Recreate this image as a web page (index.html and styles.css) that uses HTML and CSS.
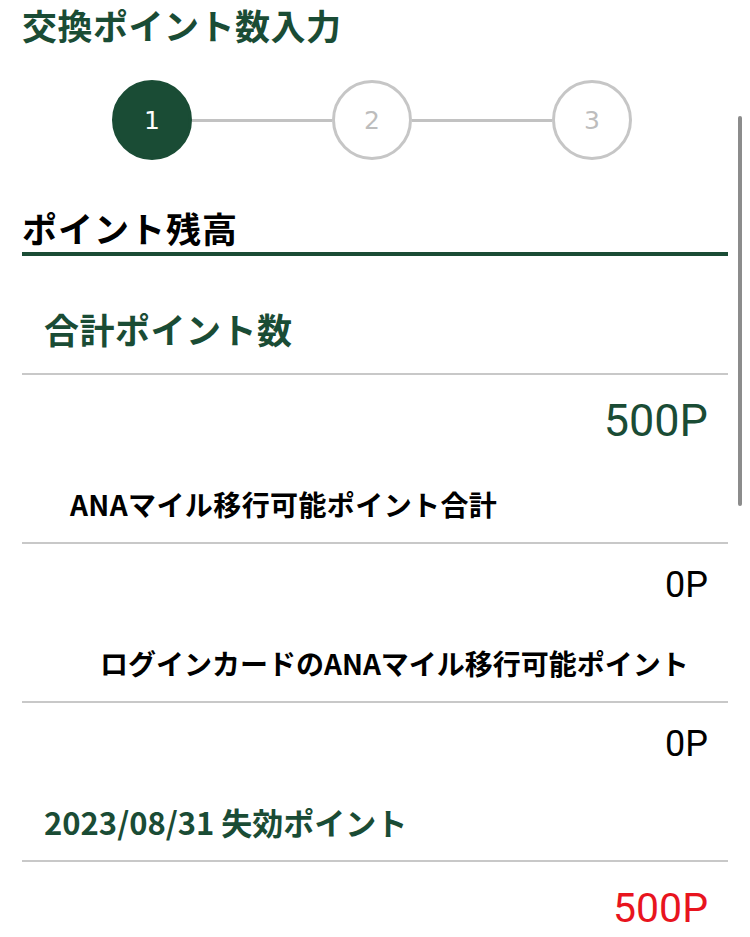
FILE: index.html
```html
<!DOCTYPE html>
<html lang="ja">
<head>
    <meta charset="UTF-8">
    <meta name="viewport" content="width=device-width, initial-scale=1.0">
    <title>交換ポイント数入力</title>
    <link rel="stylesheet" href="styles.css">
</head>
<body>
    <div class="page">
        <h1 class="page-title">交換ポイント数入力</h1>

        <!-- ステップ表示 -->
        <div class="stepper">
            <div class="step step-active">1</div>
            <div class="step-line"></div>
            <div class="step">2</div>
            <div class="step-line"></div>
            <div class="step">3</div>
        </div>

        <h2 class="section-title">ポイント残高</h2>

        <div class="balance">
            <div class="entry">
                <div class="entry-label label-total">合計ポイント数</div>
                <div class="entry-value value-large value-green">500P</div>
            </div>
            <div class="entry">
                <div class="entry-label label-sub label-indent-1">ANAマイル移行可能ポイント合計</div>
                <div class="entry-value">0P</div>
            </div>
            <div class="entry">
                <div class="entry-label label-sub label-indent-2">ログインカードのANAマイル移行可能ポイント</div>
                <div class="entry-value">0P</div>
            </div>
            <div class="entry">
                <div class="entry-label label-sub label-expire">2023/08/31 失効ポイント</div>
                <div class="entry-value value-large value-red">500P</div>
            </div>
        </div>
    </div>

    <div class="scroll-indicator"></div>
</body>
</html>
```

FILE: styles.css
```css
body {
    margin: 0;
    background: #fff;
    font-family: "Noto Sans CJK JP", "Noto Sans", sans-serif;
    color: #000;
    position: relative;
    min-height: 937px;
}

.page {
    padding: 0 22px;
}

.page-title {
    margin: 0;
    font-size: 35px;
    line-height: 50px;
    letter-spacing: 0.5px;
    font-weight: 700;
    color: #1a4c35;
}

/* ステップ */
.stepper {
    display: flex;
    align-items: center;
    margin: 30px 0 0 90px;
}

.step {
    width: 80px;
    height: 80px;
    box-sizing: border-box;
    border: 3px solid #c6c6c6;
    border-radius: 50%;
    display: flex;
    align-items: center;
    justify-content: center;
    font-family: "DejaVu Sans", sans-serif;
    font-size: 25px;
    color: #bdbdbd;
    background: #fff;
}

.step-active {
    background: #1a4c35;
    border-color: #1a4c35;
    color: #fff;
}

.step-line {
    width: 140px;
    height: 3px;
    background: #c2c2c2;
}

.section-title {
    margin: 48px 0 0 0;
    padding-bottom: 4px;
    font-size: 35px;
    line-height: 40px;
    letter-spacing: 1px;
    font-weight: 700;
    border-bottom: 4px solid #1a4c35;
}

/* 残高リスト */
.balance {
    margin-top: 53px;
}

.entry-label {
    font-weight: 700;
}

.label-total {
    padding: 0 0 24px 22px;
    font-size: 35px;
    line-height: 40px;
    letter-spacing: 0.5px;
    color: #1a4c35;
}

.label-sub {
    padding-top: 41px;
    padding-bottom: 21px;
    font-size: 28px;
    line-height: 34px;
}

.label-indent-1 {
    padding-left: 48px;
    letter-spacing: 0.4px;
}

.label-indent-2 {
    padding-left: 78px;
}

.label-expire {
    padding-left: 22px;
    font-size: 31px;
    color: #1a4c35;
}

.entry-value {
    border-top: 2px solid #c8c8c8;
    padding: 21px 20px 0 0;
    text-align: right;
    font-family: Roboto, "Liberation Sans", sans-serif;
    font-size: 36px;
    line-height: 40px;
}

.value-large {
    font-size: 45px;
    line-height: 50px;
}

.value-green {
    color: #1a4c35;
}

.value-red {
    font-size: 41px;
    color: #e8141e;
}

.scroll-indicator {
    position: absolute;
    left: 738px;
    top: 116px;
    width: 4px;
    height: 390px;
    border-radius: 2px;
    background: #8c8c8c;
}
```
